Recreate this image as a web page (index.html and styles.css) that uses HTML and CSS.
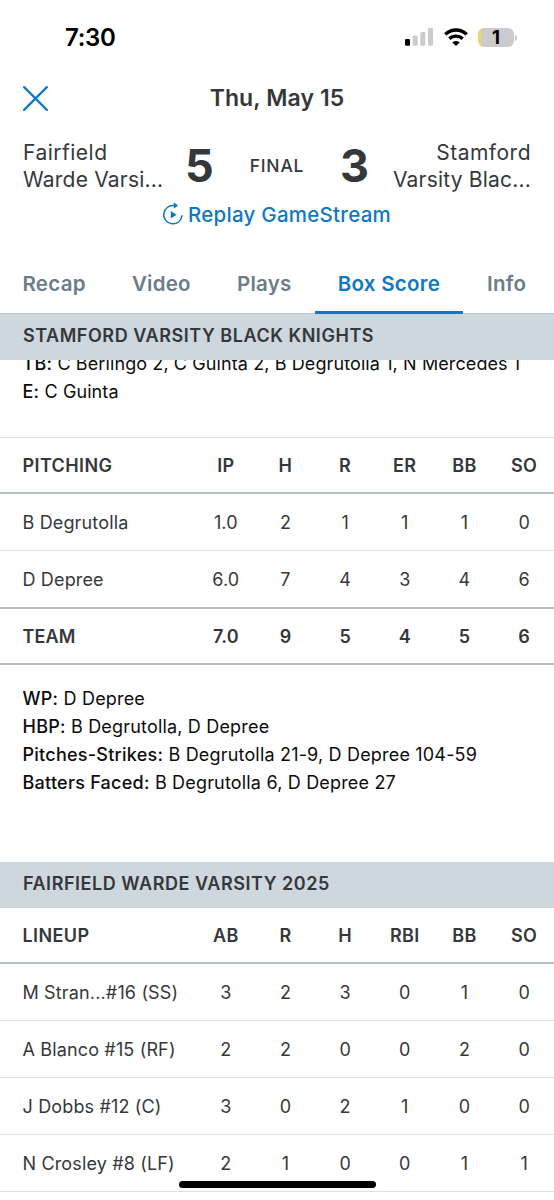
FILE: index.html
```html
<!DOCTYPE html>
<html lang="en">
  <head>
    <meta charset="UTF-8">
    <meta name="viewport" content="width=device-width, initial-scale=1.0">
    <link rel="stylesheet" href="styles.css">
    <title>Box Score</title>
  </head>
  <body>
    <div class="screen">
      <div class="status">
        <span class="clock">7:30</span>
        <div class="status-icons">
          <svg class="signal" viewBox="0 0 28 18">
            <rect class="on" x="0" y="11" width="5" height="6.7" rx="1.3" />
            <rect x="7.7" y="7.5" width="5" height="10.2" rx="1.3" />
            <rect x="15.3" y="4" width="5" height="13.7" rx="1.3" />
            <rect x="23" y="0" width="5" height="17.7" rx="1.3" />
          </svg>
          <svg class="wifi" viewBox="0 0 24 18">
            <path d="M1.3 6.4C7.4.5 16.6.5 22.7 6.4" />
            <path d="M5.3 10.8c3.8-3.6 9.6-3.6 13.4 0" />
            <path class="dot" d="M8.3 14.6c2-2 5.4-2 7.4 0L12 18z" />
          </svg>
          <div class="battery"><span>1</span></div>
        </div>
      </div>

      <header class="header">
        <svg class="close" viewBox="0 0 26 26">
          <path d="M1.2 1.2l23.6 23.6M24.8 1.2L1.2 24.8" />
        </svg>
        <h1>Thu, May 15</h1>
      </header>

      <div class="score">
        <p class="team">Fairfield<br>Warde Varsi...</p>
        <strong>5</strong>
        <span class="final">FINAL</span>
        <strong>3</strong>
        <p class="team away">Stamford<br>Varsity Blac...</p>
      </div>

      <a class="replay">
        <svg viewBox="0 0 20 23">
          <path d="M19.1 13.3A9.2 9.2 0 1 1 11.5 3.6" />
          <path class="fill" d="M10.8.2l4.2 3.3-4.2 3.3zM7.8 9l5.8 3.7-5.8 3.7z" />
        </svg>
        Replay GameStream
      </a>

      <nav class="tabs">
        <a>Recap</a>
        <a>Video</a>
        <a>Plays</a>
        <a class="active">Box Score</a>
        <a>Info</a>
      </nav>

      <h2 class="section sticky">STAMFORD VARSITY BLACK KNIGHTS</h2>
      <div class="notes batting-notes">
        <p><b>TB:</b> C Berlingo 2, C Guinta 2, B Degrutolla 1, N Mercedes 1</p>
        <p><b>E:</b> C Guinta</p>
      </div>

      <table class="pitching">
        <thead>
          <tr><th>PITCHING</th><th>IP</th><th>H</th><th>R</th><th>ER</th><th>BB</th><th>SO</th></tr>
        </thead>
        <tbody>
          <tr><td>B Degrutolla</td><td>1.0</td><td>2</td><td>1</td><td>1</td><td>1</td><td>0</td></tr>
          <tr><td>D Depree</td><td>6.0</td><td>7</td><td>4</td><td>3</td><td>4</td><td>6</td></tr>
        </tbody>
        <tfoot>
          <tr><td>TEAM</td><td>7.0</td><td>9</td><td>5</td><td>4</td><td>5</td><td>6</td></tr>
        </tfoot>
      </table>

      <div class="notes">
        <p><b>WP:</b> D Depree</p>
        <p><b>HBP:</b> B Degrutolla, D Depree</p>
        <p><b>Pitches-Strikes:</b> B Degrutolla 21-9, D Depree 104-59</p>
        <p><b>Batters Faced:</b> B Degrutolla 6, D Depree 27</p>
      </div>

      <h2 class="section">FAIRFIELD WARDE VARSITY 2025</h2>
      <table>
        <thead>
          <tr><th>LINEUP</th><th>AB</th><th>R</th><th>H</th><th>RBI</th><th>BB</th><th>SO</th></tr>
        </thead>
        <tbody>
          <tr><td>M Stran...#16 (SS)</td><td>3</td><td>2</td><td>3</td><td>0</td><td>1</td><td>0</td></tr>
          <tr><td>A Blanco #15 (RF)</td><td>2</td><td>2</td><td>0</td><td>0</td><td>2</td><td>0</td></tr>
          <tr><td>J Dobbs #12 (C)</td><td>3</td><td>0</td><td>2</td><td>1</td><td>0</td><td>0</td></tr>
          <tr><td>N Crosley #8 (LF)</td><td>2</td><td>1</td><td>0</td><td>0</td><td>1</td><td>1</td></tr>
        </tbody>
      </table>
      <div class="home-bar"></div>
    </div>
  </body>
</html>
```

FILE: styles.css
```css
:root {
--blue: #1077c0;
--text: #35383b;
--muted: #6b7c8a;
--bar: #ced6de;
}
* {
margin: 0;
padding: 0;
box-sizing: border-box;
}
body {
background-color: #fff;
color: var(--text);
font-family: Inter, "Liberation Sans", sans-serif;
}
.screen {
position: relative;
width: 554px;
height: 1200px;
overflow: hidden;
}
.status {
height: 74px;
padding: 0 40px 0 65px;
display: flex;
align-items: center;
justify-content: space-between;
}
.clock {
color: #000;
font-size: 24px;
font-weight: 600;
letter-spacing: -0.3px;
}
.status-icons {
display: flex;
align-items: center;
}
.signal {
width: 28px;
height: 18px;
fill: #cbcbcd;
}
.signal .on {
fill: #000;
}
.wifi {
width: 24px;
height: 18px;
margin: 0 10.5px;
fill: none;
stroke: #000;
stroke-width: 3.3;
}
.wifi .dot {
fill: #000;
stroke: none;
}
.battery {
position: relative;
width: 36px;
height: 19px;
border-radius: 6px;
background: linear-gradient(90deg, #f3d664 2.5px, #cbcbcd 2.5px);
color: #000;
font-size: 18.5px;
font-weight: 700;
line-height: 19px;
text-align: center;
}
.battery::after {
content: "";
position: absolute;
top: 7px;
right: -3px;
width: 2px;
height: 6px;
border-radius: 0 2px 2px 0;
background-color: #cbcbcd;
}
.header {
height: 48px;
padding: 0 23px;
display: grid;
grid-template-columns: 25px 1fr 25px;
align-items: center;
}
.close {
width: 25px;
height: 25px;
stroke: var(--blue);
stroke-width: 2.3;
stroke-linecap: round;
}
h1 {
font-size: 23px;
font-weight: 600;
letter-spacing: 0.1px;
line-height: 29px;
text-align: center;
}
.score {
height: 78px;
padding: 18px 23px 0;
display: flex;
align-items: flex-start;
}
.team {
width: 161px;
font-size: 21px;
line-height: 26.7px;
letter-spacing: 0.2px;
white-space: nowrap;
}
.team::first-line {
letter-spacing: 0.5px;
}
.away {
text-align: right;
}
.score strong {
width: 31px;
font-size: 45px;
font-weight: 700;
line-height: 51px;
text-align: center;
}
.final {
flex: 1;
font-size: 17.5px;
font-weight: 500;
line-height: 51px;
letter-spacing: 0.8px;
text-align: center;
}
.replay {
height: 28px;
display: flex;
align-items: center;
justify-content: center;
gap: 5px;
color: var(--blue);
font-size: 20.5px;
font-weight: 500;
letter-spacing: 0.27px;
}
.replay svg {
width: 20px;
height: 23px;
margin-top: -2px;
fill: none;
stroke: var(--blue);
stroke-width: 1.5;
}
.replay .fill {
fill: var(--blue);
stroke: none;
}
.tabs {
height: 86px;
padding-top: 25px;
display: flex;
border-bottom: 1px solid #c3cbd2;
}
.tabs a {
padding: 0 23px 0 22.5px;
color: var(--muted);
font-size: 20.5px;
font-weight: 600;
letter-spacing: 0.25px;
line-height: 61px;
}
.tabs a:nth-child(-n+3) {
padding-right: 23.7px;
}
.tabs .active {
height: 61px;
color: var(--blue);
border-bottom: 3px solid var(--blue);
}
.tabs a:last-child {
padding-left: 24px;
}
.section {
height: 46px;
padding: 0 23px;
background-color: var(--bar);
font-size: 18px;
font-weight: 600;
letter-spacing: 0.54px;
line-height: 44px;
}
.sticky {
position: relative;
z-index: 1;
}
.notes {
height: 197px;
padding: 20px 22.5px 0;
color: #0c0c0c;
font-size: 18px;
letter-spacing: 0.18px;
line-height: 28px;
white-space: nowrap;
}
.notes b {
font-weight: 500;
letter-spacing: 0.25px;
}
.batting-notes {
height: 77px;
margin-top: -10px;
padding-top: 0;
letter-spacing: 0.1px;
}
.batting-notes + table {
margin-top: 10px;
}
table {
width: 554px;
table-layout: fixed;
border-spacing: 0;
font-size: 18px;
}
th, td {
height: 57px;
border-bottom: 1px solid #dcdfe2;
font-weight: 400;
letter-spacing: 0.15px;
text-align: center;
}
th:first-child,
td:first-child {
width: 196px;
padding-left: 22.5px;
text-align: left;
white-space: nowrap;
}
th {
height: 56px;
border-bottom: 2px solid #b9c0c8;
font-weight: 600;
letter-spacing: 0.4px;
}
.pitching {
border-top: 1px solid #dcdfe2;
}
.pitching tbody tr:last-child td {
height: 58px;
}
.pitching tbody tr:last-child td,
tfoot td {
border-bottom: 2px solid #b9c0c8;
}
tfoot td {
height: 56px;
font-weight: 600;
}
.home-bar {
position: absolute;
left: 179px;
bottom: 12px;
width: 197px;
height: 7px;
border-radius: 4px;
background-color: #000;
}
```
